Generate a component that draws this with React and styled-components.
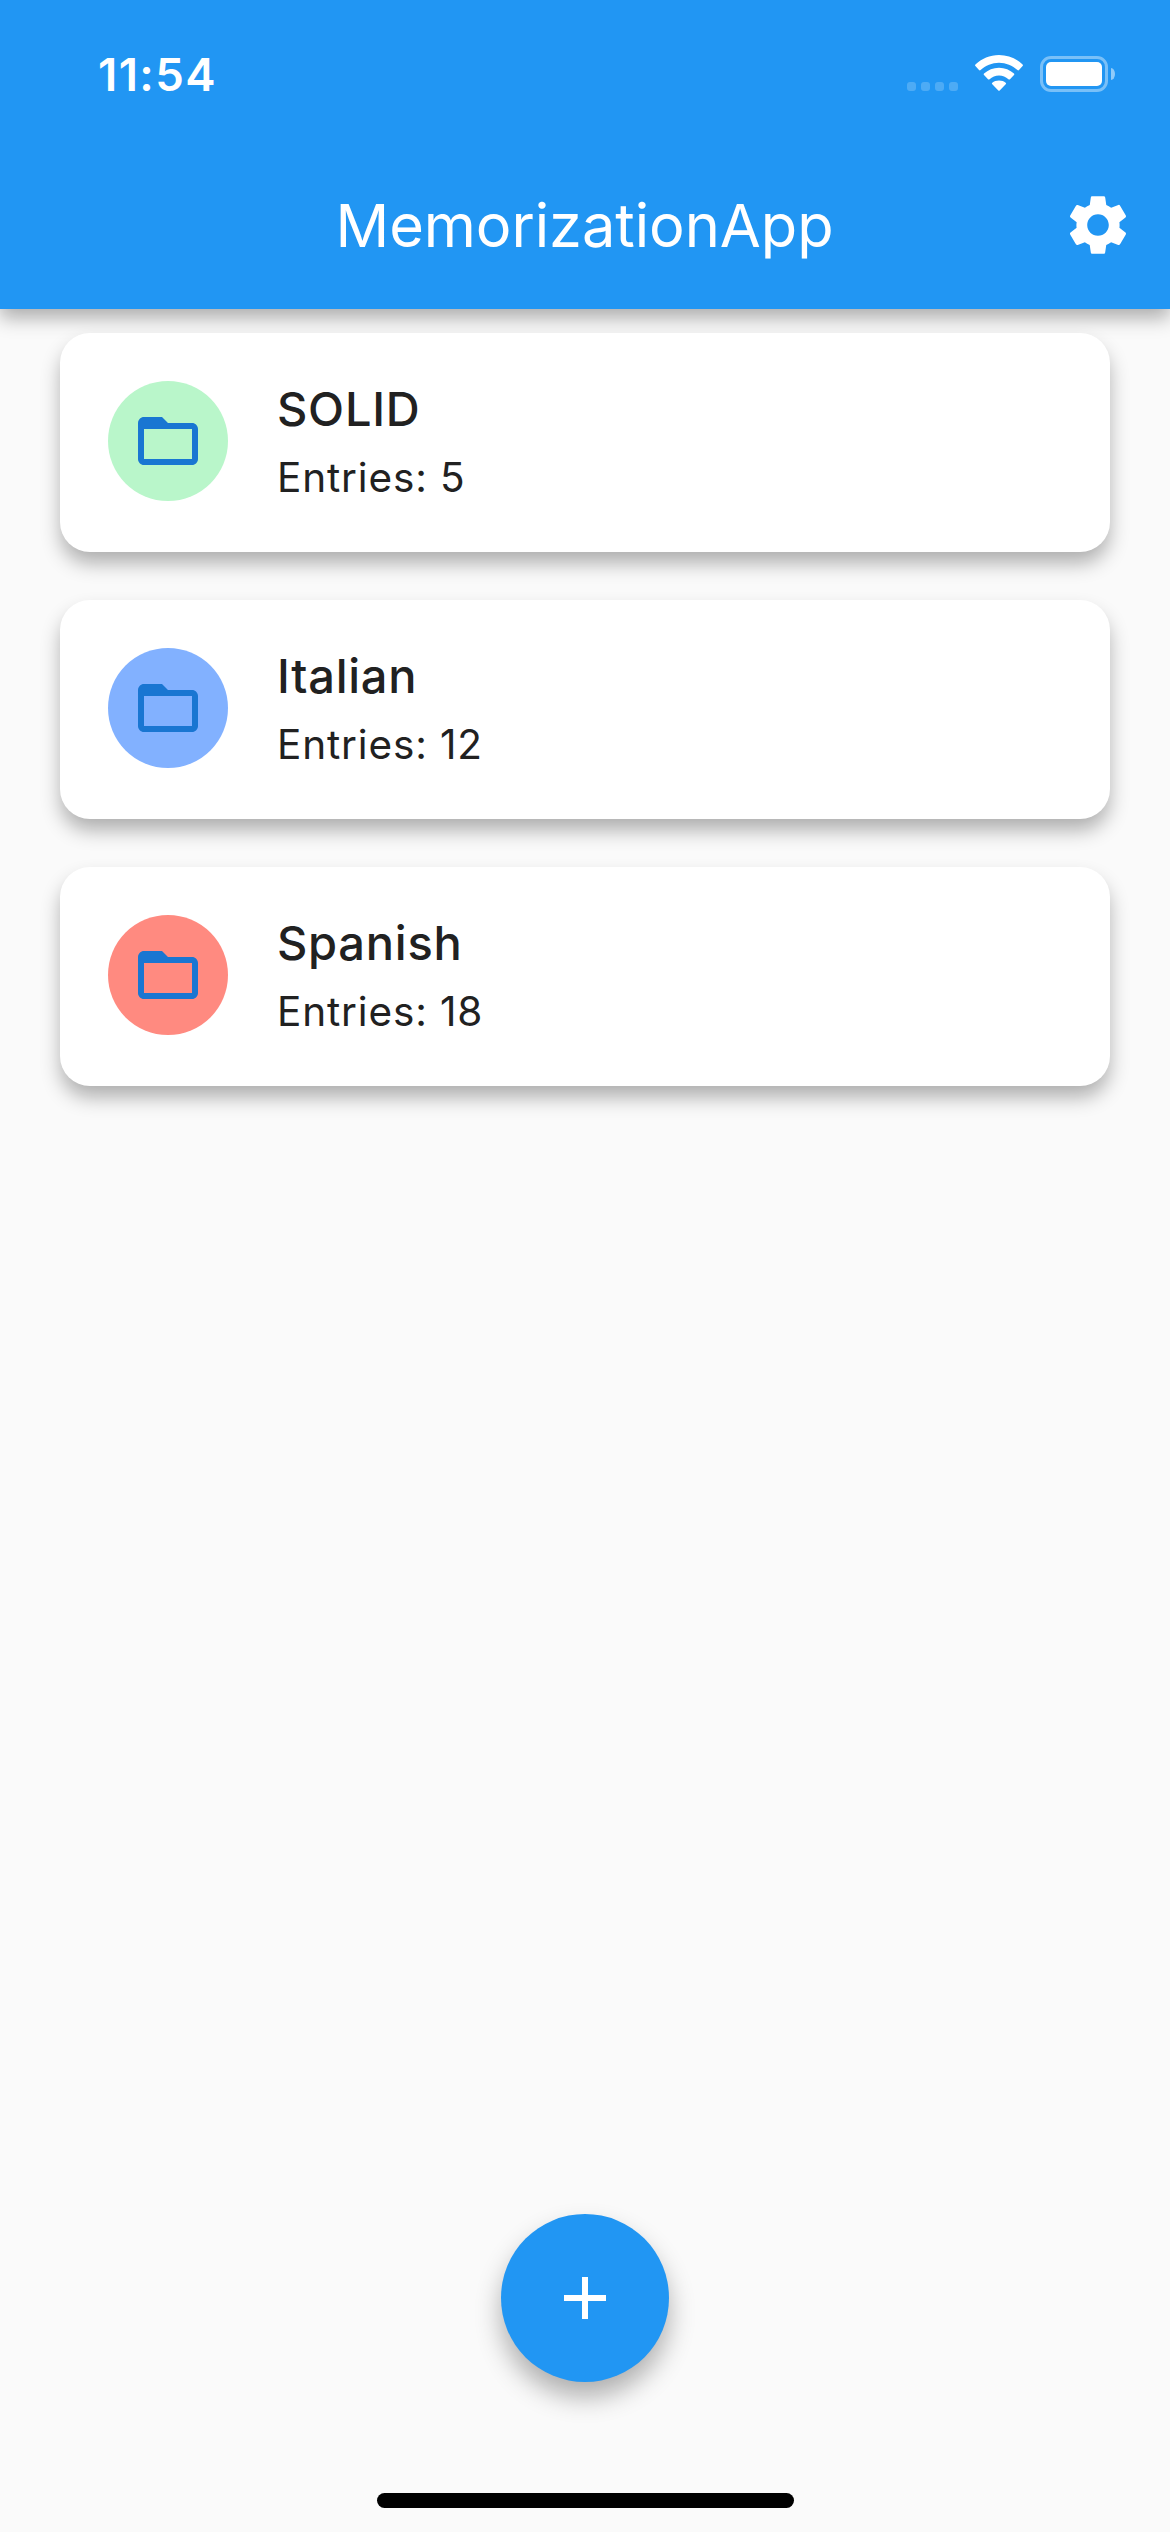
import React from "react";
import styled, { createGlobalStyle } from "styled-components";
import { MdAdd, MdFolderOpen, MdSettings } from "react-icons/md";

const GlobalStyle = createGlobalStyle`
  * { box-sizing: border-box; }
  body {
    margin: 0;
    background: #fafafa;
    font-family: Inter, Roboto, "Liberation Sans", sans-serif;
  }
`;

const Screen = styled.div`
  display: flex;
  flex-direction: column;
  width: 1170px;
  height: 2532px;
  overflow: hidden;
  background: #fafafa;
`;

const AppBar = styled.header`
  flex: none;
  height: 309px;
  background: #2196f3;
  color: #fff;
  box-shadow: 0 9px 18px rgba(0, 0, 0, 0.31);
`;

const StatusBar = styled.div`
  display: flex;
  justify-content: space-between;
  height: 141px;
  padding: 50px 55px 0 98px;
`;

const Time = styled.time`
  font-size: 45.5px;
  font-weight: 600;
  line-height: 50px;
  letter-spacing: 1.4px;
`;

const StatusIcons = styled.div`
  display: flex;
  align-items: flex-end;
  height: 42px;
`;

const SignalDots = styled.div`
  display: flex;
  gap: 5px;
  margin: 0 17px 1px 0;
`;

const Dot = styled.span`
  width: 9px;
  height: 9px;
  border-radius: 3px;
  background: rgba(255, 255, 255, 0.2);
`;

const WifiIcon = styled.svg`
  width: 48px;
  height: 36px;
  margin: 0 17px 1px 0;
`;

const Battery = styled.div`
  display: flex;
  align-items: center;
  gap: 3px;
`;

const BatteryCase = styled.div`
  width: 68px;
  height: 36px;
  padding: 3px;
  border: 3px solid rgba(255, 255, 255, 0.4);
  border-radius: 11px;
`;

const BatteryLevel = styled.div`
  height: 100%;
  border-radius: 5px;
  background: #fff;
`;

const BatteryTip = styled.div`
  width: 4px;
  height: 12px;
  border-radius: 0 4px 4px 0 / 0 6px 6px 0;
  background: rgba(255, 255, 255, 0.5);
`;

const Toolbar = styled.div`
  display: grid;
  grid-template-columns: 144px 1fr 144px;
  align-items: center;
  height: 168px;
`;

const Title = styled.h1`
  grid-column: 2;
  margin: 0;
  padding-right: 1px;
  font-size: 59.5px;
  font-weight: 400;
  line-height: 72px;
  letter-spacing: -0.05px;
  text-align: center;
`;

const IconButton = styled.button`
  display: flex;
  align-items: center;
  justify-content: center;
  height: 144px;
  padding: 0;
  border: 0;
  background: none;
  color: inherit;
  font-size: 72px;
`;

const DeckList = styled.main`
  display: flex;
  flex: 1;
  flex-direction: column;
  gap: 48px;
  padding: 24px 60px;
`;

const DeckCard = styled.article`
  display: flex;
  gap: 49px;
  height: 219px;
  padding: 48px;
  border-radius: 30px;
  background: #fff;
  box-shadow: 0 12px 20px -1px rgba(0, 0, 0, 0.31);
`;

const Avatar = styled.div`
  display: flex;
  align-items: center;
  justify-content: center;
  width: 120px;
  height: 120px;
  border-radius: 50%;
  background: ${(p) => p.$color};
  color: #1976d2;
  font-size: 72px;
`;

const DeckText = styled.div`
  display: flex;
  flex-direction: column;
  gap: 14px;
  color: #212121;
`;

const DeckName = styled.h2`
  margin: 0;
  font-size: 47px;
  font-weight: 500;
  line-height: 56px;
  letter-spacing: 0.75px;
`;

const DeckCount = styled.p`
  margin: 0;
  font-size: 40.5px;
  line-height: 54px;
  letter-spacing: 0.85px;
`;

const Footer = styled.footer`
  display: flex;
  flex-direction: column;
  align-items: center;
  gap: 111px;
  padding-bottom: 24px;
`;

const AddButton = styled.button`
  display: flex;
  align-items: center;
  justify-content: center;
  width: 168px;
  height: 168px;
  padding: 0;
  border: 0;
  border-radius: 50%;
  background: #2196f3;
  color: #fff;
  font-size: 72px;
  box-shadow: 0 15px 26px rgba(0, 0, 0, 0.3);
`;

const HomeIndicator = styled.div`
  width: 417px;
  height: 15px;
  margin-left: 1px;
  border-radius: 8px;
  background: #000;
`;

const decks = [
  { name: "SOLID", entries: 5, color: "#b9f6ca" },
  { name: "Italian", entries: 12, color: "#82b1ff" },
  { name: "Spanish", entries: 18, color: "#ff8a80" },
];

export default function App() {
  return (
    <>
      <GlobalStyle />
      <Screen>
        <AppBar>
          <StatusBar>
            <Time>11:54</Time>
            <StatusIcons>
              <SignalDots>
                <Dot />
                <Dot />
                <Dot />
                <Dot />
              </SignalDots>
              <WifiIcon viewBox="0 0 48 36" fill="#fff">
                <path d="M24 0C14.900 0 6.600 3.600 .4 9.600Q-.3 10.400 .4 11.100L4 15.100Q4.800 15.800 5.600 15.100C10.500 10.500 17 7.700 24 7.700S37.500 10.500 42.400 15.100Q43.200 15.800 44 15.100L47.600 11.100Q48.300 10.400 47.600 9.600C41.400 3.600 33.100 0 24 0Z" />
                <path d="M24 12.700C18.200 12.700 13 14.900 9 18.500Q8.200 19.300 9 20.100L13 24.300Q13.800 24.900 14.600 24.200C17.100 21.900 20.400 20.500 24 20.500S30.900 21.900 33.400 24.200Q34.200 24.900 35 24.300L39 20.100Q39.800 19.300 39 18.500C35 14.900 29.800 12.700 24 12.700Z" />
                <path d="M24 25.400C21.300 25.400 19 26.300 17.300 27.700Q16.500 28.500 17.300 29.300L23.300 35.500Q24 36.200 24.700 35.500L30.700 29.300Q31.500 28.500 30.700 27.700C29 26.300 26.700 25.400 24 25.400Z" />
              </WifiIcon>
              <Battery>
                <BatteryCase>
                  <BatteryLevel />
                </BatteryCase>
                <BatteryTip />
              </Battery>
            </StatusIcons>
          </StatusBar>
          <Toolbar>
            <Title>MemorizationApp</Title>
            <IconButton aria-label="Settings">
              <MdSettings />
            </IconButton>
          </Toolbar>
        </AppBar>
        <DeckList>
          {decks.map((deck) => (
            <DeckCard key={deck.name}>
              <Avatar $color={deck.color}>
                <MdFolderOpen />
              </Avatar>
              <DeckText>
                <DeckName>{deck.name}</DeckName>
                <DeckCount>Entries: {deck.entries}</DeckCount>
              </DeckText>
            </DeckCard>
          ))}
        </DeckList>
        <Footer>
          <AddButton aria-label="Add">
            <MdAdd />
          </AddButton>
          <HomeIndicator />
        </Footer>
      </Screen>
    </>
  );
}
